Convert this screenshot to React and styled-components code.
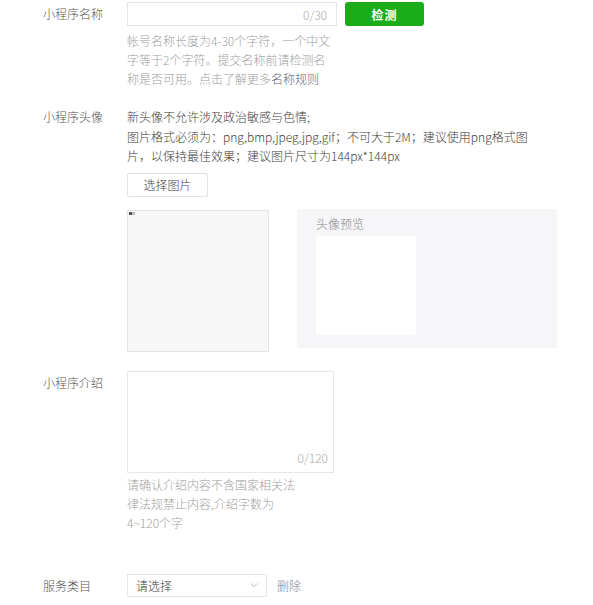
import React from 'react';
import styled, { createGlobalStyle } from 'styled-components';

const GlobalStyle = createGlobalStyle`
  body {
    margin: 0;
    background: #fff;
    font-family: "Noto Sans CJK SC", "Noto Sans", "Liberation Sans", sans-serif;
    font-size: 12px;
    font-weight: 300;
    color: #3e3e3e;
  }
`;

const Form = styled.div`
  display: flex;
  flex-direction: column;
  padding: 2px 0 0 43px;
`;

const Row = styled.div`
  display: grid;
  grid-template-columns: 84px 1fr;
  margin-top: ${p => p.$gap || 0}px;
`;

const Label = styled.div`
  color: #555;
  line-height: ${p => p.$lh || 24}px;
`;

const Field = styled.div`
  display: flex;
  flex-direction: column;
  align-items: flex-start;
`;

const InputLine = styled.div`
  display: flex;
  align-items: center;
  gap: 8px;
`;

const TextInput = styled.div`
  box-sizing: border-box;
  width: 210px;
  height: 24px;
  border: 1px solid #e7e7eb;
  display: flex;
  align-items: center;
  justify-content: flex-end;
  padding: 0 9px;
  color: #a8a8a8;
`;

const GreenButton = styled.button`
  width: 79px;
  height: 24px;
  border: none;
  border-radius: 3px;
  background: #1aad19;
  color: #fff;
  font: inherit;
  font-weight: bold;
  letter-spacing: 1px;
`;

const Hint = styled.div`
  color: #a0a0a0;
  line-height: 19px;
  margin-top: ${p => p.$top || 0}px;
`;

const Link = styled.a`
  color: #5b6477;
  text-decoration: none;
`;

const Note = styled.div`
  line-height: 19.5px;
`;

const PlainButton = styled.button`
  margin-top: 7px;
  width: 81px;
  height: 24px;
  background: #fff;
  border: 1px solid #e3e3e3;
  border-radius: 2px;
  font: inherit;
  color: #3e3e3e;
`;

const Avatars = styled.div`
  display: flex;
  align-items: flex-start;
  gap: 28px;
  margin-top: 12px;
`;

const UploadBox = styled.div`
  position: relative;
  box-sizing: border-box;
  width: 142px;
  height: 142px;
  margin-top: 1px;
  background: #f7f7f7;
  border: 1px solid #e3e3e3;
`;

const BrokenMark = styled.span`
  position: absolute;
  left: 1px;
  top: 1px;
  width: 3px;
  height: 3px;
  background: #555;
  box-shadow: 3px 0 0 #bbb;
`;

const Preview = styled.div`
  box-sizing: border-box;
  width: 260px;
  height: 139px;
  background: #f6f6f8;
  padding: 5px 19px 0;
  display: flex;
  flex-direction: column;
  gap: 3px;
  color: #8a8a8a;
  line-height: 19px;
`;

const PreviewSquare = styled.div`
  width: 100px;
  height: 99px;
  background: #fff;
  border-radius: 3px;
`;

const TextArea = styled.div`
  box-sizing: border-box;
  width: 207px;
  height: 102px;
  border: 1px solid #e7e7eb;
  display: flex;
  align-items: flex-end;
  justify-content: flex-end;
  padding: 0 5px 6px;
  color: #a8a8a8;
`;

const SelectLine = styled.div`
  display: flex;
  align-items: center;
  gap: 10px;
`;

const Select = styled.div`
  box-sizing: border-box;
  width: 140px;
  height: 23px;
  border: 1px solid #e7e7eb;
  display: flex;
  align-items: center;
  justify-content: space-between;
  padding: 0 8px;
`;

const Delete = styled.span`
  color: #7d8596;
`;

const Chevron = () => (
  <svg width="8" height="6" viewBox="0 0 8 6">
    <path d="M1 1.5 L4 4.5 L7 1.5" fill="none" stroke="#b5b5b5" strokeWidth="1" />
  </svg>
);

const App = () => (
  <>
    <GlobalStyle />
    <Form>
      <Row>
        <Label>小程序名称</Label>
        <Field>
          <InputLine>
            <TextInput>0/30</TextInput>
            <GreenButton>检测</GreenButton>
          </InputLine>
          <Hint $top={5}>
            帐号名称长度为4-30个字符，一个中文<br />
            字等于2个字符。提交名称前请检测名<br />
            称是否可用。点击了解更多<Link href="#">名称规则</Link>
          </Hint>
        </Field>
      </Row>

      <Row $gap={19}>
        <Label $lh={19.5}>小程序头像</Label>
        <Field>
          <Note>
            新头像不允许涉及政治敏感与色情;<br />
            图片格式必须为：png,bmp,jpeg,jpg,gif；不可大于2M；建议使用png格式图<br />
            片，以保持最佳效果；建议图片尺寸为144px*144px
          </Note>
          <PlainButton>选择图片</PlainButton>
          <Avatars>
            <UploadBox>
              <BrokenMark />
            </UploadBox>
            <Preview>
              头像预览
              <PreviewSquare />
            </Preview>
          </Avatars>
        </Field>
      </Row>

      <Row $gap={19}>
        <Label>小程序介绍</Label>
        <Field>
          <TextArea>0/120</TextArea>
          <Hint $top={2}>
            请确认介绍内容不含国家相关法<br />
            律法规禁止内容,介绍字数为<br />
            4~120个字
          </Hint>
        </Field>
      </Row>

      <Row $gap={42}>
        <Label $lh={23}>服务类目</Label>
        <Field>
          <SelectLine>
            <Select>
              请选择
              <Chevron />
            </Select>
            <Delete>删除</Delete>
          </SelectLine>
        </Field>
      </Row>
    </Form>
  </>
);

export default App;
